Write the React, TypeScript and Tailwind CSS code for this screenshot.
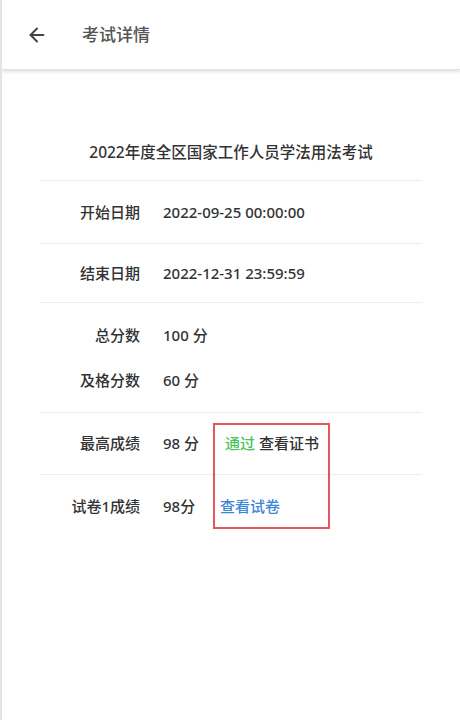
import { ArrowLeft } from 'lucide-react'

const font = { fontFamily: '"Noto Sans", "Noto Sans CJK SC", sans-serif' }

function Row({ label, value, children, className = '' }: { label: string; value: string; children?: React.ReactNode; className?: string }) {
  return (
    <div className={`flex items-center ${className}`}>
      <div className="w-[100px] text-right text-[15px] text-[#333]">{label}</div>
      <div className="ml-[23px] w-[50px] text-[15px] text-[#333] whitespace-nowrap">{value}</div>
      {children}
    </div>
  )
}

export default function App() {
  return (
    <div className="w-[460px] h-[720px] bg-white border-l-2 border-[#e4e4e4] relative overflow-hidden font-medium" style={font}>
      {/* header */}
      <div className="h-[70px] flex items-center bg-white shadow-[0_2px_3px_rgba(0,0,0,0.12)] border-b border-[#e2e2e2]">
        <ArrowLeft className="ml-[24px] w-[22px] h-[22px] text-[#444]" strokeWidth={2.2} />
        <h1 className="ml-[34px] text-[17px] text-[#555]">考试详情</h1>
      </div>

      {/* card */}
      <div className="mx-[38px] mt-[55px] w-[382px] relative">
        <div className="h-[56px] flex items-center justify-center text-[15.5px] text-[#333] border-b border-[#eeeeee]">
          2022年度全区国家工作人员学法用法考试
        </div>
        <div className="h-[63px] flex items-center border-b border-[#eeeeee]">
          <div className="w-[100px] text-right text-[15px] text-[#333]">开始日期</div>
          <div className="ml-[23px] text-[15px] text-[#333]">2022-09-25 00:00:00</div>
        </div>
        <div className="h-[59px] flex items-center border-b border-[#eeeeee]">
          <div className="w-[100px] text-right text-[15px] text-[#333]">结束日期</div>
          <div className="ml-[23px] text-[15px] text-[#333]">2022-12-31 23:59:59</div>
        </div>
        <div className="h-[110px] flex flex-col justify-center gap-[22px] border-b border-[#eeeeee]">
          <Row label="总分数" value="100 分" />
          <Row label="及格分数" value="60 分" />
        </div>
        <Row label="最高成绩" value="98 分" className="h-[62px] border-b border-[#eeeeee]">
          <div className="ml-[12px] text-[15px]">
            <span className="text-[#4cc45a]">通过</span>
            <span className="ml-[4px] text-[#333]">查看证书</span>
          </div>
        </Row>
        <Row label="试卷1成绩" value="98分" className="h-[62px]">
          <div className="ml-[7px] text-[15px] text-[#3d86d8]">查看试卷</div>
        </Row>

        {/* annotation box */}
        <div className="absolute left-[173px] top-[298px] w-[117px] h-[106px] border-2 border-[#e2575b]" />
      </div>
    </div>
  )
}
